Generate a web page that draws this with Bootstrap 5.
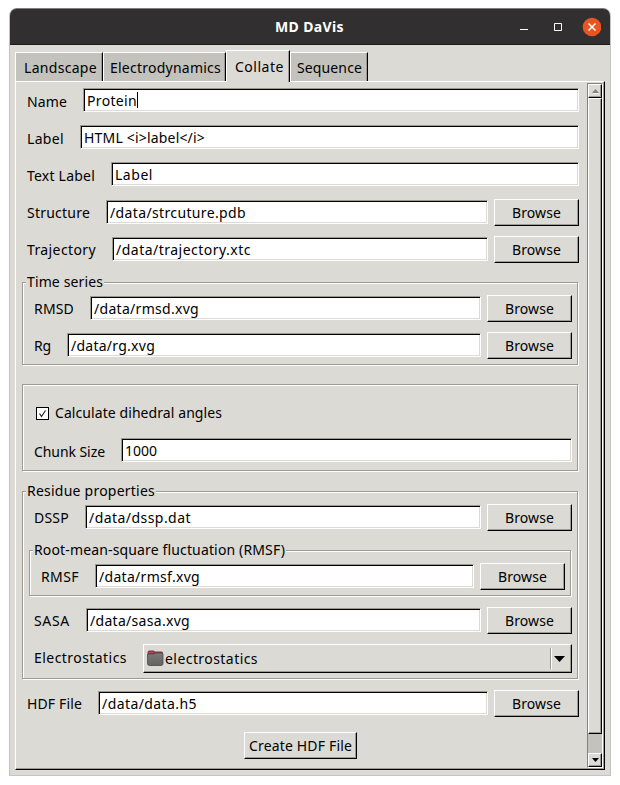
<!DOCTYPE html>
<html lang="en">
<head>
<meta charset="utf-8">
<title>MD DaVis</title>
<link href="https://cdn.jsdelivr.net/npm/bootstrap@5.3.0/dist/css/bootstrap.min.css" rel="stylesheet">
<style>
:root{--face:#dcdad5;--dim:#9e9a91;--trough:#c4c2bd}
body{background:#fff;font:14px/20px "Noto Sans","Open Sans",sans-serif;color:#000;overflow:hidden}
.window{width:602px;height:768px;margin:8px 0 0 9px;border:1px solid #c3c3c3;border-top:0;border-radius:8px 8px 0 0;background:var(--face);overflow:hidden}
.titlebar{height:37px;margin:0 -1px;background:#312f30;border-top:1px solid #807e7f;border-bottom:1px solid #1d1b1c;color:#fff;border-radius:8px 8px 0 0;padding-right:10px;padding-left:266px}
.titlebar b{line-height:36px}
.tabs{height:36px;padding:5px 0 0 5px}
.tabitem{height:29px;background:var(--trough);border:1px solid #fff;border-right-color:#000;border-bottom:0;box-shadow:inset -1px 0 var(--dim);line-height:29px;padding-left:8px}
.tabitem.current{height:32px;margin-bottom:-1px;background:var(--face);line-height:31px;z-index:1;position:relative}
.pane{width:590px;height:689px;margin-left:5px;border:1px solid;border-color:#fff #000 #000 #fff;box-shadow:inset -1px -1px var(--dim)}
.form{width:557px;margin:6px 0 0 6px}
.line{height:27px;margin-bottom:10px;padding-left:5px}
.line>.fit:first-child{margin-right:16px;line-height:28px}
.fit{display:inline-block;white-space:pre;flex:none}
.entry{height:24px;background:#fff;border:1px solid;border-color:var(--dim) #fff #fff var(--dim);box-shadow:inset 1px 1px #000,inset -1px -1px var(--face);padding-left:3px;line-height:23px}
.browse .entry{margin-top:1px}
.push{width:85px;height:27px;margin-left:6px;border:1px solid;border-color:#fff #000 #000 #fff;box-shadow:inset -1px -1px var(--dim);line-height:26px;text-align:center;flex:none;border-radius:0}
.caret{width:1px;height:16px;background:#000;margin-top:3px}
.group{border:1px solid var(--dim);box-shadow:1px 1px #fff,inset 1px 1px #fff;margin-right:1px;padding:0 5px 0 6px}
.group .line{margin-right:0}
.caption{height:12px}
.caption .fit{background:var(--face);margin:-11px 0 0 -3px;padding:0 1px;height:20px}
.series{height:83px;margin-top:19px}
.dihedral{height:87px;margin-top:19px}
.residue{height:188px;margin-top:20px}
.rmsf{height:46px;margin:19px 1px 11px 0}
.checkmark{width:13px;height:13px;border:1px solid #000;background:#fff}
.combo{height:29px;border:1px solid;border-color:#fff #000 #000 #fff;box-shadow:inset -1px -1px var(--dim);padding:0 6px 0 3px}
.divider{width:2px;height:21px;background:var(--dim);border-right:1px solid #fff}
.scroll{width:16px;height:685px;margin:1px 1px 0 0;border:1px solid;border-color:#85827c #fff #fff #85827c;background:var(--trough)}
.knob{background:var(--face);border:1px solid;border-color:#fff #000 #000 #fff;box-shadow:inset -1px -1px var(--dim)}
.step{height:14px}
.thumb{height:636px;margin-bottom:19px}
svg{display:block;flex:none}
</style>
</head>
<body>
<div class="window">
  <div class="titlebar d-flex align-items-center">
    <b class="fit me-auto" data-w="69">MD DaVis</b>
    <svg width="82" height="20" viewBox="0 0 82 20"><path d="M1 12.500h8" stroke="#fff"/><path d="M35.500 6.500h7v7h-7z" fill="none" stroke="#fff"/><circle cx="73" cy="10" r="9.300" fill="#e95420"/><path d="M69.500 6.500l7 7M76.500 6.500l-7 7" stroke="#fff" stroke-width="1.500"/></svg>
  </div>
  <div class="tabs d-flex align-items-end">
    <div class="tabitem" style="width:88px"><span class="fit" data-w="73">Landscape</span></div>
    <div class="tabitem" style="width:123px"><span class="fit" data-w="111" style="margin-left:-2px">Electrodynamics</span></div>
    <div class="tabitem current" style="width:64px"><span class="fit" data-w="49">Collate</span></div>
    <div class="tabitem" style="width:78px"><span class="fit" data-w="65" style="margin-left:-2px">Sequence</span></div>
  </div>
  <div class="pane d-flex justify-content-between">
    <div class="form">
      <div class="line d-flex"><span class="fit" data-w="40">Name</span><div class="entry flex-grow-1 d-flex"><span class="fit" data-w="50">Protein</span><i class="caret"></i></div></div>
      <div class="line d-flex"><span class="fit" data-w="37">Label</span><div class="entry flex-grow-1"><span class="fit" data-w="121">HTML &lt;i&gt;label&lt;/i&gt;</span></div></div>
      <div class="line d-flex"><span class="fit" data-w="68">Text Label</span><div class="entry flex-grow-1"><span class="fit" data-w="38">Label</span></div></div>
      <div class="line browse d-flex"><span class="fit" data-w="63">Structure</span><div class="entry flex-grow-1"><span class="fit" data-w="136">/data/strcuture.pdb</span></div><div class="push"><span class="fit" data-w="49">Browse</span></div></div>
      <div class="line browse d-flex mb-0"><span class="fit" data-w="69">Trajectory</span><div class="entry flex-grow-1"><span class="fit" data-w="135">/data/trajectory.xtc</span></div><div class="push"><span class="fit" data-w="49">Browse</span></div></div>

      <div class="group series">
        <div class="caption d-flex"><span class="fit" data-w="76">Time series</span></div>
        <div class="line browse d-flex"><span class="fit" data-w="40">RMSD</span><div class="entry flex-grow-1"><span class="fit" data-w="105">/data/rmsd.xvg</span></div><div class="push"><span class="fit" data-w="49">Browse</span></div></div>
        <div class="line browse d-flex mb-0"><span class="fit" data-w="17">Rg</span><div class="entry flex-grow-1"><span class="fit" data-w="84">/data/rg.xvg</span></div><div class="push"><span class="fit" data-w="49">Browse</span></div></div>
      </div>

      <div class="group dihedral">
        <div class="d-flex align-items-center" style="height:53px;padding:3px 0 0 7px"><span class="checkmark"><svg width="11" height="11" viewBox="0 0 11 11"><path d="M2.500 5.500l2 3L8.500 2.500" fill="none" stroke="#222" stroke-width="1.200"/></svg></span><span class="fit" data-w="167" style="margin-left:6px">Calculate dihedral angles</span></div>
        <div class="line d-flex mb-0"><span class="fit" data-w="71">Chunk Size</span><div class="entry flex-grow-1"><span class="fit" data-w="32">1000</span></div></div>
      </div>

      <div class="group residue">
        <div class="caption d-flex"><span class="fit" data-w="128">Residue properties</span></div>
        <div class="line browse d-flex mb-0"><span class="fit" data-w="35">DSSP</span><div class="entry flex-grow-1"><span class="fit" data-w="102">/data/dssp.dat</span></div><div class="push"><span class="fit" data-w="49">Browse</span></div></div>
        <div class="group rmsf">
          <div class="caption d-flex"><span class="fit" data-w="251">Root-mean-square fluctuation (RMSF)</span></div>
          <div class="line browse d-flex mb-0"><span class="fit" data-w="38">RMSF</span><div class="entry flex-grow-1"><span class="fit" data-w="101">/data/rmsf.xvg</span></div><div class="push"><span class="fit" data-w="49">Browse</span></div></div>
        </div>
        <div class="line browse d-flex"><span class="fit" data-w="36">SASA</span><div class="entry flex-grow-1"><span class="fit" data-w="100">/data/sasa.xvg</span></div><div class="push"><span class="fit" data-w="49">Browse</span></div></div>
        <div class="line d-flex mb-0"><span class="fit" data-w="93">Electrostatics</span>
          <div class="combo flex-grow-1 d-flex align-items-center">
            <svg width="18" height="17" viewBox="0 0 18 17"><defs><linearGradient id="front" x2="0" y2="1"><stop stop-color="#7a7978"/><stop offset="1" stop-color="#646362"/></linearGradient></defs><path d="M.5 2.500Q.5.500 2.500.500H6.500l1.500 1H14.500Q16 1.500 16 3v4H.5z" fill="#8a3444"/><path d="M1.500 2.500h5" stroke="#c04a5c"/><path d="M.5 5Q.5 4 1.500 4H7L8.500 3H14.500Q16 3 16 4.500V13.500q0 2-2 2H2.500q-2 0-2-2z" fill="url(#front)" stroke="#4c4a49" stroke-width=".8"/></svg>
            <span class="fit me-auto" data-w="93">electrostatics</span>
            <i class="divider"></i>
            <svg width="11" height="6" viewBox="0 0 11 6" style="margin-left:2px"><path d="M0 0h11L5.500 6z"/></svg>
          </div></div>
      </div>

      <div class="line browse d-flex" style="margin-top:11px;margin-bottom:15px"><span class="fit" data-w="55">HDF File</span><div class="entry flex-grow-1"><span class="fit" data-w="95">/data/data.h5</span></div><div class="push"><span class="fit" data-w="49">Browse</span></div></div>
      <div class="d-flex justify-content-center"><div class="push m-0" style="width:113px"><span class="fit" data-w="103">Create HDF File</span></div></div>
    </div>
    <div class="scroll">
      <div class="knob step d-flex align-items-center justify-content-center"><svg width="7" height="5" viewBox="0 0 7 5"><path d="M1 5h6" stroke="#fff"/><path d="M3.500 0L7 4H0z" fill="#85827c"/></svg></div>
      <div class="knob thumb"></div>
      <div class="knob step d-flex align-items-center justify-content-center"><svg width="7" height="4" viewBox="0 0 7 4"><path d="M0 0h7L3.500 4z"/></svg></div>
    </div>
  </div>
</div>
<script src="https://cdn.jsdelivr.net/npm/bootstrap@5.3.0/dist/js/bootstrap.bundle.min.js"></script>
<script>
document.querySelectorAll('.fit').forEach(el => {
  const range = document.createRange();
  range.selectNodeContents(el);
  const gap = (el.dataset.w - range.getBoundingClientRect().width) / el.textContent.length;
  el.style.letterSpacing = gap + 'px';
});
</script>
</body>
</html>
